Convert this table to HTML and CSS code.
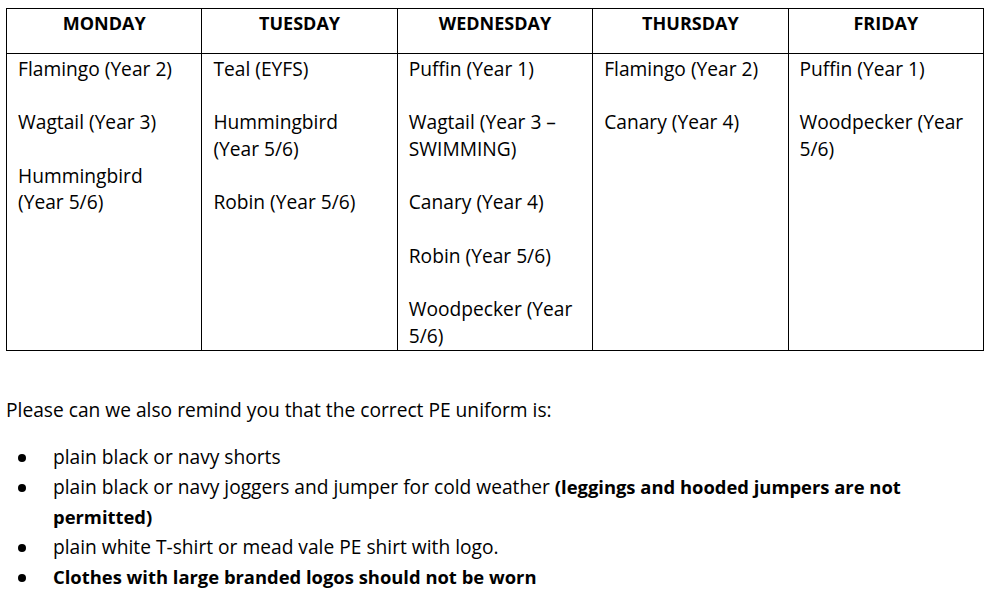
FILE: index.html
```html
<!DOCTYPE html>
<html>
<head>
<meta charset="utf-8">
<link rel="stylesheet" href="styles.css">
</head>
<body>
<table class="timetable">
  <thead>
    <tr>
      <th>MONDAY</th>
      <th>TUESDAY</th>
      <th>WEDNESDAY</th>
      <th>THURSDAY</th>
      <th>FRIDAY</th>
    </tr>
  </thead>
  <tbody>
    <tr>
      <td>
        <p>Flamingo (Year 2)</p>
        <p>Wagtail (Year 3)</p>
        <p>Hummingbird<br>(Year 5/6)</p>
      </td>
      <td>
        <p>Teal (EYFS)</p>
        <p>Hummingbird<br>(Year 5/6)</p>
        <p>Robin (Year 5/6)</p>
      </td>
      <td>
        <p>Puffin (Year 1)</p>
        <p>Wagtail (Year 3 –<br>SWIMMING)</p>
        <p>Canary (Year 4)</p>
        <p>Robin (Year 5/6)</p>
        <p>Woodpecker (Year<br>5/6)</p>
      </td>
      <td>
        <p>Flamingo (Year 2)</p>
        <p>Canary (Year 4)</p>
      </td>
      <td>
        <p>Puffin (Year 1)</p>
        <p>Woodpecker (Year<br>5/6)</p>
      </td>
    </tr>
  </tbody>
</table>

<p class="intro">Please can we also remind you that the correct PE uniform is:</p>
<ul class="uniform">
  <li><span class="item">plain black or navy shorts</span></li>
  <li><span class="item">plain black or navy joggers and jumper for cold weather <strong>(leggings and hooded jumpers are not<br>permitted)</strong></span></li>
  <li><span class="item">plain white T-shirt or mead vale PE shirt with logo.</span></li>
  <li><span class="item"><strong>Clothes with large branded logos should not be worn</strong></span></li>
</ul>
</body>
</html>
```

FILE: styles.css
```css
html, body {
  background: #fff;
}
body {
  margin: 0;
  padding: 8px 6px 0 6px;
  font-family: "Open Sans", "Lato", sans-serif;
  font-size: 19.2px;
  color: #000;
}
.timetable {
  border-collapse: collapse;
  width: 978px;
  table-layout: fixed;
}
.timetable th,
.timetable td {
  border: 1px solid #000;
  vertical-align: top;
  padding: 0 11px;
}
.timetable th {
  height: 43px;
  font-weight: 700;
  text-align: center;
  line-height: 27px;
  padding-top: 1px;
  font-size: 18px;
}
.timetable td {
  line-height: 26.7px;
  padding-top: 2px;
  text-align: left;
}
.timetable td p {
  margin: 0 0 26.7px 0;
}
.timetable td p:last-child {
  margin-bottom: 0;
}
.intro {
  margin: 44px 0 0 0;
  line-height: 30px;
}
.uniform {
  list-style: none;
  margin: 17px 0 0 0;
  padding: 0;
  line-height: 30px;
}
.uniform li {
  display: grid;
  grid-template-columns: 47px 1fr;
  align-items: start;
}
.uniform li::before {
  content: "";
  width: 8px;
  height: 8px;
  border-radius: 50%;
  background: #000;
  margin: 12px 0 0 12px;
}
.uniform strong {
  font-weight: 700;
  font-size: 18.4px;
}
```
